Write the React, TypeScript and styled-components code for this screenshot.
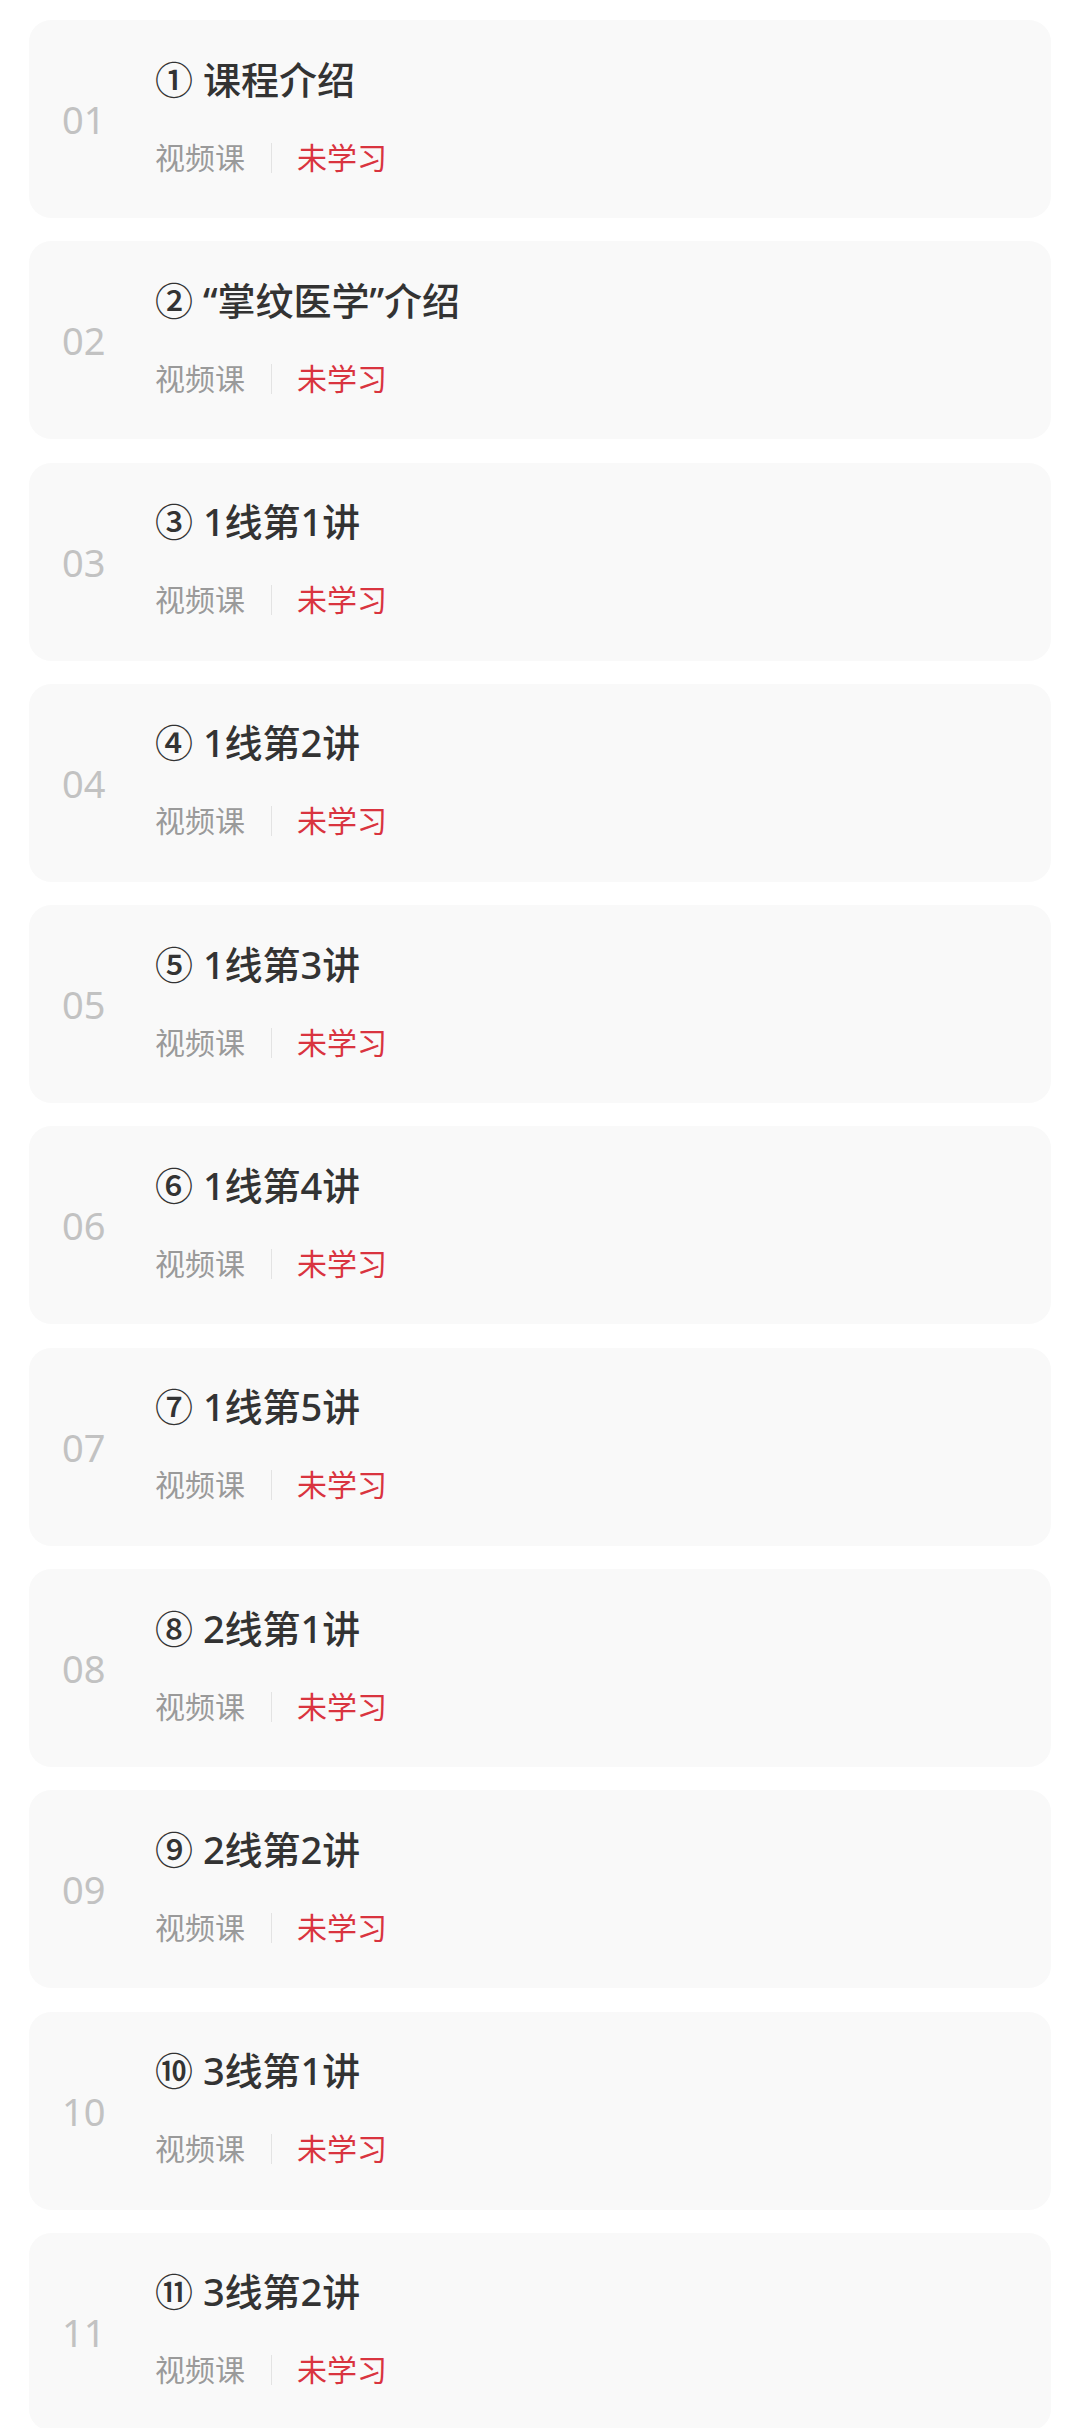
import { ReactElement } from 'react'
import styled, { createGlobalStyle } from 'styled-components'

const GlobalStyle = createGlobalStyle`
  html, body {
    margin: 0;
    padding: 0;
    background: #ffffff;
  }
  body {
    font-family: "Noto Sans", "Noto Sans CJK SC", sans-serif;
    -webkit-font-smoothing: antialiased;
  }
`

const List = styled.div`
  display: flex;
  flex-direction: column;
  gap: 23.3px;
  padding: 20px 29px 40px;
`

const Card = styled.div`
  display: flex;
  align-items: center;
  height: 198px;
  background: #f9f9f9;
  border-radius: 22px;
  padding: 0 0 0 33px;
  box-sizing: border-box;
`

const Index = styled.div`
  width: 93px;
  flex-shrink: 0;
  font-size: 38px;
  line-height: 1;
  color: #c2c2c2;
  font-weight: 400;
`

const Content = styled.div`
  display: flex;
  flex-direction: column;
  gap: 34px;
  padding-bottom: 6px;
`

const Title = styled.div`
  font-size: 38px;
  line-height: 49px;
  font-weight: 500;
  color: #333333;
  white-space: nowrap;
`

const Meta = styled.div`
  display: flex;
  align-items: center;
  font-size: 30px;
  line-height: 40px;
  color: #9a9a9a;
`

const Divider = styled.span`
  width: 1px;
  height: 30px;
  background: #e3e3e3;
  margin: 0 25px 0 26px;
`

const Status = styled.span<{ $learned?: boolean }>`
  color: ${(props) => (props.$learned ? '#9a9a9a' : '#d9343f')};
`

const lessons = [
  '① 课程介绍',
  '② “掌纹医学”介绍',
  '③ 1线第1讲',
  '④ 1线第2讲',
  '⑤ 1线第3讲',
  '⑥ 1线第4讲',
  '⑦ 1线第5讲',
  '⑧ 2线第1讲',
  '⑨ 2线第2讲',
  '⑩ 3线第1讲',
  '⑪ 3线第2讲',
]

function App(): ReactElement {
  return (
    <>
      <GlobalStyle />
      <List>
        {lessons.map((title, index) => (
          <Card key={index}>
            <Index>{String(index + 1).padStart(2, '0')}</Index>
            <Content>
              <Title>{title}</Title>
              <Meta>
                视频课
                <Divider />
                <Status>未学习</Status>
              </Meta>
            </Content>
          </Card>
        ))}
      </List>
    </>
  )
}

export default App
